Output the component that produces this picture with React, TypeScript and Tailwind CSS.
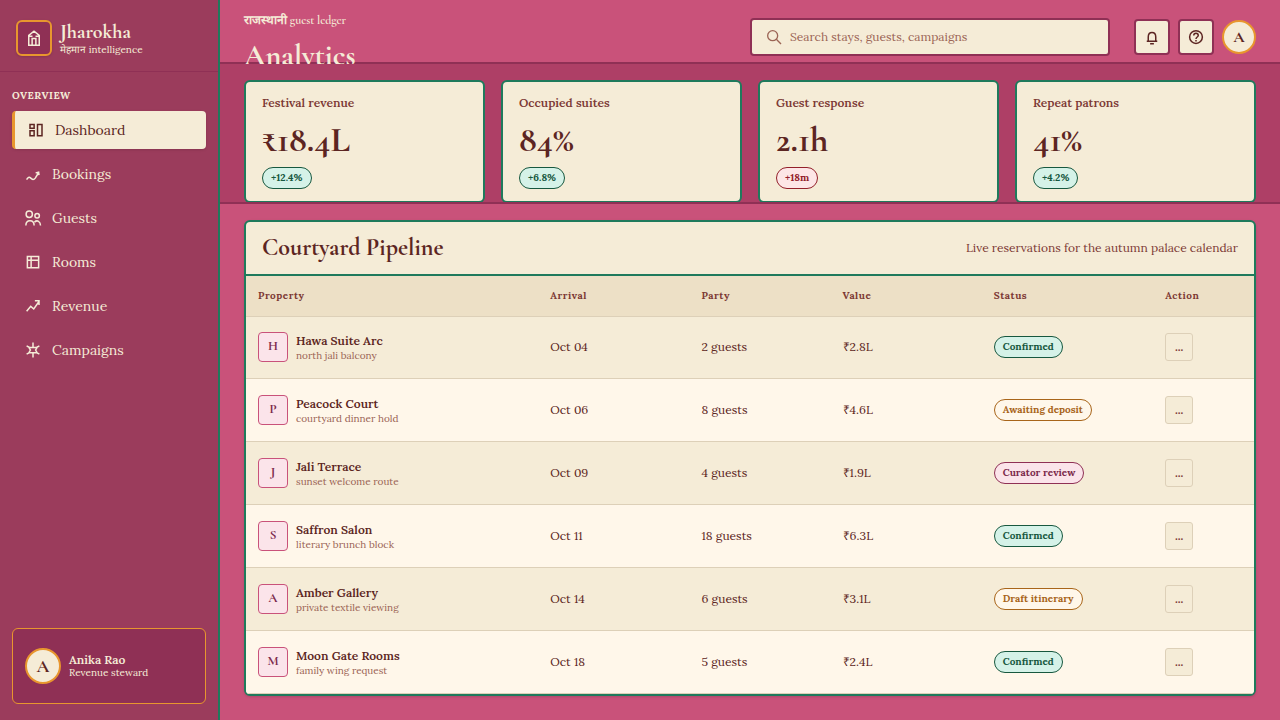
import type { ReactNode } from "react";

type Tone = "green" | "amber" | "plum" | "red";

const DISPLAY = "font-['Cormorant_Garamond','Liberation_Serif',serif]";

const TONES: Record<Tone, string> = {
  green: "bg-[#d5f2e8] border-[#17583f] text-[#17583f]",
  amber: "bg-[#fff7ea] border-[#a8651a] text-[#a8651a]",
  plum: "bg-[#fbe4ea] border-[#8f3055] text-[#7c2a4c]",
  red: "bg-[#fde6e6] border-[#93202a] text-[#93202a]",
};

const NAV: { label: string; icon: ReactNode }[] = [
  { label: "Dashboard", icon: <path d="M4 4.5h5.5v5H4zM4 13h5.5v6.5H4zM14 4.5h6v15h-6z" /> },
  { label: "Bookings", icon: <path d="M3.5 19.5C5 16.5 7 15.5 9 17.5s4 2.5 6 0L19 11M15.5 10.5l4-1 .5 4" /> },
  {
    label: "Guests",
    icon: (
      <>
        <circle cx="7" cy="7" r="4.2" />
        <circle cx="17.5" cy="9" r="3" />
        <path d="M2.5 22c0-8.500 11-8.500 11 0M14 17.500c3.500-3.500 8-1 8 4.500" />
      </>
    ),
  },
  { label: "Rooms", icon: <path d="M4.5 4.5h15v15h-15zM4.5 9.5h15M9.5 4.5v15" /> },
  { label: "Revenue", icon: <path d="M3.5 19l5.500-6.500 4 3.500L20 6M14.500 5h5.500v5.500" /> },
  {
    label: "Campaigns",
    icon: <path d="M12 2v6M12 16v6M3.5 6.5L8 9M20.5 6.5L16 9M3.5 17.5L8 15M20.5 17.5L16 15M6.5 8.500h11L15.500 12l2 3.500h-11l2-3.500z" />,
  },
];

const STATS: { label: string; value: string; delta: string; tone: Tone }[] = [
  { label: "Festival revenue", value: "₹18.4L", delta: "+12.4%", tone: "green" },
  { label: "Occupied suites", value: "84%", delta: "+6.8%", tone: "green" },
  { label: "Guest response", value: "2.1h", delta: "+18m", tone: "red" },
  { label: "Repeat patrons", value: "41%", delta: "+4.2%", tone: "green" },
];

const ROWS: { name: string; note: string; arrival: string; party: string; value: string; status: string; tone: Tone }[] = [
  { name: "Hawa Suite Arc", note: "north jali balcony", arrival: "Oct 04", party: "2 guests", value: "₹2.8L", status: "Confirmed", tone: "green" },
  { name: "Peacock Court", note: "courtyard dinner hold", arrival: "Oct 06", party: "8 guests", value: "₹4.6L", status: "Awaiting deposit", tone: "amber" },
  { name: "Jali Terrace", note: "sunset welcome route", arrival: "Oct 09", party: "4 guests", value: "₹1.9L", status: "Curator review", tone: "plum" },
  { name: "Saffron Salon", note: "literary brunch block", arrival: "Oct 11", party: "18 guests", value: "₹6.3L", status: "Confirmed", tone: "green" },
  { name: "Amber Gallery", note: "private textile viewing", arrival: "Oct 14", party: "6 guests", value: "₹3.1L", status: "Draft itinerary", tone: "amber" },
  { name: "Moon Gate Rooms", note: "family wing request", arrival: "Oct 18", party: "5 guests", value: "₹2.4L", status: "Confirmed", tone: "green" },
];

function Icon({ children, className }: { children: ReactNode; className: string }) {
  return (
    <svg viewBox="0 0 24 24" fill="none" stroke="currentColor" strokeWidth="2" className={`shrink-0 ${className}`}>
      {children}
    </svg>
  );
}

function Pill({ tone, children }: { tone: Tone; children: ReactNode }) {
  return (
    <span className={`inline-flex h-[22px] items-center rounded-full border px-2 pb-px text-[10px] font-bold whitespace-nowrap ${TONES[tone]}`}>
      {children}
    </span>
  );
}

function Sidebar() {
  return (
    <aside className="flex w-[220px] shrink-0 flex-col border-r-2 border-[#1f7a5c] bg-[#9b3c5c] text-[#f5ecd7]">
      <div className="flex h-[72px] items-center gap-2 border-b border-[#8f3055] px-4 pt-1">
        <div className="flex size-9 items-center justify-center rounded-md border-2 border-[#e8962e] bg-[#8f3055] shadow-sm">
          <Icon className="size-[18px]">
            <path d="M5 21.500V8.500L12 3l7 5.500v13zM5 9.500h5M14 9.500h5M9.500 21v-8.500h5V21" />
          </Icon>
        </div>
        <div className="flex flex-col pt-px">
          <span className={`text-xl leading-[22px] font-bold ${DISPLAY}`}>Jharokha</span>
          <span className="text-[10px] leading-[13px]">मेहमान intelligence</span>
        </div>
      </div>
      <p className="mt-4 mb-2 px-3 text-[10px] leading-[15px] font-bold tracking-[0.5px] uppercase">Overview</p>
      <nav className="flex flex-col gap-1.5 px-3">
        {NAV.map((item, i) => (
          <a
            key={item.label}
            className={`flex h-[38px] items-center gap-2.5 rounded pl-3 text-sm ${
              i === 0 ? "border-l-[3px] border-[#e8962e] bg-[#f5ecd7] text-[#5c2522] shadow-sm" : ""
            }`}
          >
            <Icon className="size-[18px]">{item.icon}</Icon>
            {item.label}
          </a>
        ))}
      </nav>
      <div className="mx-3 mt-auto mb-4 flex h-[76px] items-center gap-2 rounded-md border border-[#e8962e] bg-[#8f3055] px-3">
        <div className={`flex size-9 items-center justify-center rounded-full border-2 border-[#e8962e] bg-[#f5ecd7] text-lg font-bold text-[#5c2522] ${DISPLAY}`}>
          A
        </div>
        <div className="flex flex-col">
          <span className="text-xs leading-[13px] font-semibold">Anika Rao</span>
          <span className="text-[10px] leading-[13px]">Revenue steward</span>
        </div>
      </div>
    </aside>
  );
}

function Header() {
  return (
    <header className="h-16 shrink-0 overflow-hidden">
      <div className="flex h-16 items-start border-b-2 border-[#8f3055] px-6">
        <div className="flex flex-1 flex-col pt-3 text-[#f5ecd7]">
          <span className={`text-xs leading-4 font-semibold ${DISPLAY}`}>राजस्थानी guest ledger</span>
          <h1 className={`mt-2.5 text-[30px] leading-9 font-bold ${DISPLAY}`}>Analytics</h1>
        </div>
        <div className="mt-[18px] flex h-[38px] w-[360px] items-center gap-2 rounded border-2 border-[#8f3055] bg-[#f5ecd7] px-3.5 text-xs text-[#9b6455]">
          <Icon className="size-4">
            <circle cx="10" cy="10" r="7.5" />
            <path d="M15.5 15.5l7 7" />
          </Icon>
          Search stays, guests, campaigns
        </div>
        <div className="mt-[19px] ml-6 flex gap-2 text-[#5c2522]">
          <button className="flex size-9 items-center justify-center rounded border-2 border-[#8f3055] bg-[#f5ecd7]">
            <Icon className="size-[18px]">
              <path d="M5 17.500h14M7 17.500V12c0-8 10-8 10 0v5.500M9.500 21h5" />
            </Icon>
          </button>
          <button className="flex size-9 items-center justify-center rounded border-2 border-[#8f3055] bg-[#f5ecd7]">
            <Icon className="size-[18px]">
              <circle cx="12" cy="12" r="8.5" />
              <path d="M9 10c0-4 6-4 6 0 0 2-3 2-3 4.500M12 16v2" />
            </Icon>
          </button>
          <div className={`flex size-[34px] items-center justify-center self-center rounded-full border-2 border-[#e8962e] bg-[#f5ecd7] text-base font-bold ${DISPLAY}`}>
            A
          </div>
        </div>
      </div>
    </header>
  );
}

function Stats() {
  return (
    <section className="grid h-[140px] shrink-0 grid-cols-4 items-start gap-4 overflow-hidden border-b-2 border-[#8f3055] bg-[#ae3f66] px-6 pt-4">
      {STATS.map((s) => (
        <div key={s.label} className="flex h-[123px] flex-col items-start rounded-md border-2 border-[#1f7a5c] bg-[#f5ecd7] px-4 pt-3">
          <span className="text-xs leading-[18px] font-semibold text-[#7d3a35]">{s.label}</span>
          <span className={`mt-[9px] mb-2 text-[36px] leading-[38px] font-bold text-[#5c2522] ${DISPLAY}`}>{s.value}</span>
          <Pill tone={s.tone}>{s.delta}</Pill>
        </div>
      ))}
    </section>
  );
}

function Pipeline() {
  return (
    <section className="mx-6 mt-4 h-[476px] shrink-0 overflow-hidden rounded-md border-2 border-[#1f7a5c] bg-[#f5ecd7] shadow-sm">
      <div className="flex h-[54px] items-center justify-between border-b-2 border-[#1f7a5c] px-4">
        <h2 className={`text-2xl font-bold text-[#5c2522] ${DISPLAY}`}>Courtyard Pipeline</h2>
        <p className="text-xs text-[#7d3a35]">Live reservations for the autumn palace calendar</p>
      </div>
      <div className="grid h-[41px] grid-cols-[29%_15%_14%_15%_17%_10%] items-center border-b border-[#ddd0b8] bg-[#ede0c6] pb-px text-[10px] font-bold tracking-[0.5px] text-[#7d3a35] *:px-3">
        <span>Property</span>
        <span>Arrival</span>
        <span>Party</span>
        <span>Value</span>
        <span>Status</span>
        <span>Action</span>
      </div>
      <div>
        {ROWS.map((r) => (
          <div
            key={r.name}
            className="grid h-[63px] grid-cols-[29%_15%_14%_15%_17%_10%] items-center border-b border-[#ddd0b8] text-xs text-[#5c2522] first:h-[62px] first:pb-px odd:bg-[#f5ecd7] even:bg-[#fff7ea] *:px-3"
          >
            <div className="flex items-center gap-2">
              <span className={`flex size-[30px] items-center justify-center rounded border border-[#c9527a] bg-[#fbe4ea] text-[13px] font-bold text-[#7c2a4c] ${DISPLAY}`}>
                {r.name[0]}
              </span>
              <span className="flex flex-col">
                <span className="leading-4 font-semibold">{r.name}</span>
                <span className="text-[10px] leading-[13px] text-[#9b6455]">{r.note}</span>
              </span>
            </div>
            <span>{r.arrival}</span>
            <span>{r.party}</span>
            <span>{r.value}</span>
            <div className="flex">
              <Pill tone={r.tone}>{r.status}</Pill>
            </div>
            <div>
              <button className="flex size-7 items-center justify-center rounded-[3px] border border-[#ddd0b8] bg-[#f5ecd7] text-xs font-bold text-[#7d3a35]">
                ...
              </button>
            </div>
          </div>
        ))}
      </div>
    </section>
  );
}

export default function App() {
  return (
    <div className="flex h-[720px] w-[1280px] overflow-hidden bg-[#c9527a] font-['Lora','Liberation_Serif',serif]">
      <Sidebar />
      <main className="flex min-w-0 flex-1 flex-col">
        <Header />
        <Stats />
        <Pipeline />
      </main>
    </div>
  );
}
